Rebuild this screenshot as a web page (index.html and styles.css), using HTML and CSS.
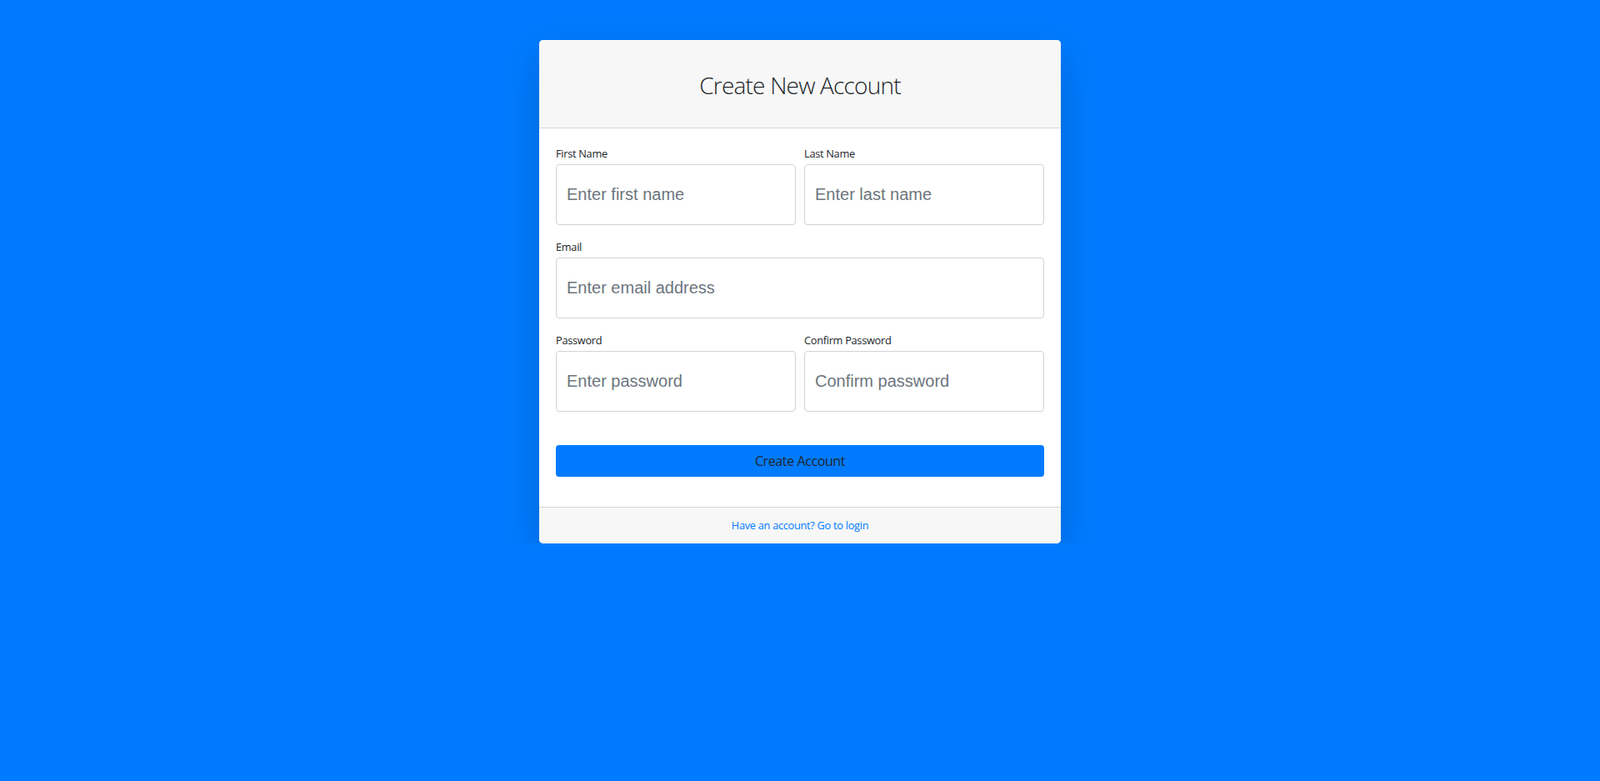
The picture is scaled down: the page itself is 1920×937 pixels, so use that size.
FILE: index.html
```html
<!DOCTYPE html>
<html lang="en">
<head>
  <meta charset="UTF-8" />
  <meta name="viewport" content="width=device-width, initial-scale=1.0" />
  <title>Register</title>
  <link rel="stylesheet" href="styles.css">
</head>
<body>
  <main class="page">
    <div class="card">
      <div class="card-header">
        <h3>Create New Account</h3>
      </div>
      <div class="card-body">
        <form>
          <div class="form-row">
            <div class="form-group">
              <label for="firstName">First Name</label>
              <input id="firstName" type="text" placeholder="Enter first name">
            </div>
            <div class="form-group">
              <label for="lastName">Last Name</label>
              <input id="lastName" type="text" placeholder="Enter last name">
            </div>
          </div>
          <div class="form-group">
            <label for="email">Email</label>
            <input id="email" type="email" placeholder="Enter email address">
          </div>
          <div class="form-row">
            <div class="form-group">
              <label for="password">Password</label>
              <input id="password" type="password" placeholder="Enter password">
            </div>
            <div class="form-group">
              <label for="confirmPassword">Confirm Password</label>
              <input id="confirmPassword" type="password" placeholder="Confirm password">
            </div>
          </div>
          <div class="form-group actions">
            <button type="button" class="btn-primary">Create Account</button>
          </div>
        </form>
      </div>
      <div class="card-footer">
        <a href="#login">Have an account? Go to login</a>
      </div>
    </div>
  </main>
</body>
</html>
```

FILE: styles.css
```css
body {
  margin: 0;
  background: #007bff;
  font-family: "Open Sans", "Noto Sans", sans-serif;
  color: #212529;
}
.page {
  display: flex;
  justify-content: center;
}
.card {
  width: 626px;
  margin-top: 48px;
  background: white;
  border-radius: 5px;
  box-shadow: 0 16px 48px rgba(0,0,0,0.175);
  overflow: hidden;
}
.card-header {
  background: #f7f7f7;
  border-bottom: 1px solid rgba(0,0,0,0.125);
  padding: 12px 20px;
  text-align: center;
}
.card-header h3 {
  margin: 26px 0 22px;
  font-size: 28px;
  font-weight: 300;
  line-height: 33px;
  letter-spacing: -0.8px;
  color: #212529;
}
.card-body {
  padding: 20px;
}
.form-row {
  display: grid;
  grid-template-columns: 1fr 1fr;
  gap: 10px;
}
.form-group {
  margin-bottom: 16px;
}
.form-group label {
  display: block;
  padding-top: 1px;
  font-size: 12.8px;
  line-height: 19px;
  letter-spacing: -0.3px;
  margin-bottom: 3px;
}
.form-group input {
  display: block;
  box-sizing: border-box;
  width: 100%;
  height: 73px;
  padding: 0 12px;
  border: 1px solid #ced4da;
  border-radius: 4px;
  font-family: "Liberation Sans", Arial, sans-serif;
  font-size: 20px;
  color: #495057;
}
.form-group input::placeholder {
  color: #6c757d;
}
.actions {
  margin-top: 24px;
}
.btn-primary {
  display: block;
  width: 100%;
  height: 38px;
  background: #007bff;
  color: #212529;
  border: none;
  border-radius: 4px;
  font-family: inherit;
  font-size: 16px;
  letter-spacing: -0.4px;
  cursor: pointer;
}
.card-footer {
  background: #f7f7f7;
  border-top: 1px solid rgba(0,0,0,0.125);
  padding: 12px 20px;
  text-align: center;
  font-size: 12.8px;
  line-height: 19px;
  letter-spacing: -0.3px;
}
.card-footer a {
  color: #007bff;
  text-decoration: none;
}
```
